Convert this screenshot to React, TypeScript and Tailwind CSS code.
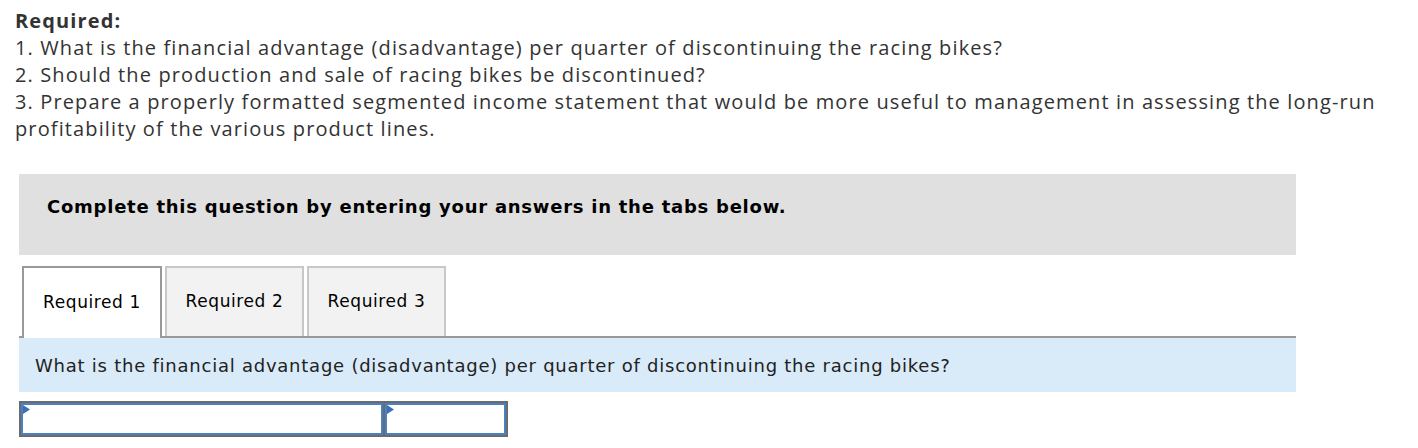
import React from "react";

const tabs = ["Required 1", "Required 2", "Required 3"];

function Tab({ label, active }: { label: string; active: boolean }) {
  return (
    <div
      className={
        active
          ? "w-[140px] h-[72px] -mb-[2px] flex items-center justify-center bg-white border-2 border-b-0 border-[#999999] text-[17px] tracking-[0.6px] text-black"
          : "w-[139px] h-[70px] flex items-center justify-center bg-[#f2f2f2] border-2 border-b-0 border-[#c8c8c8] text-[17px] tracking-[0.6px] text-black"
      }
    >
      {label}
    </div>
  );
}

function Cell({ width }: { width: string }) {
  return (
    <div className={`relative h-[32px] bg-white border-2 border-[#4b80c4] ${width}`}>
      <svg className="absolute left-0 top-0" width="7" height="9" viewBox="0 0 7 9">
        <path d="M0 0 L7 4.5 L0 9 Z" fill="#3a70b8" />
      </svg>
    </div>
  );
}

export default function App() {
  return (
    <div className="w-[1418px] h-[448px] bg-white overflow-hidden">
      <div className="pl-[15px] pt-[7px] text-[20px] leading-[27px] tracking-[1.12px] text-[#333333] [font-family:Open_Sans,sans-serif]">
        <p className="font-bold">Required:</p>
        <p>1. What is the financial advantage (disadvantage) per quarter of discontinuing the racing bikes?</p>
        <p>2. Should the production and sale of racing bikes be discontinued?</p>
        <p className="w-[1395px]">
          3. Prepare a properly formatted segmented income statement that would be more useful to management in
          assessing the long-run profitability of the various product lines.
        </p>
      </div>

      <div className="ml-[19px] w-[1277px] mt-[32px] [font-family:DejaVu_Sans,Verdana,sans-serif]">
        <div className="h-[81px] bg-[#e0e0e0] pl-[28px] pt-[21px]">
          <p className="text-[18px] leading-[24px] tracking-[0.75px] font-bold text-black">
            Complete this question by entering your answers in the tabs below.
          </p>
        </div>

        <div className="mt-[11px] pl-[3px] flex gap-[3px] border-b-2 border-[#999999]">
          {tabs.map((t, i) => (
            <Tab key={t} label={t} active={i === 0} />
          ))}
        </div>

        <div className="h-[54px] bg-[#d9ebf9] pl-[16px] flex items-center">
          <p className="text-[18px] tracking-[0.76px] text-[#222222]">
            What is the financial advantage (disadvantage) per quarter of discontinuing the racing bikes?
          </p>
        </div>

        <div className="mt-[9px] inline-flex bg-[#6b6b6b] p-[2px] gap-[2px]">
          <Cell width="w-[362px]" />
          <Cell width="w-[121px]" />
        </div>
      </div>
    </div>
  );
}
